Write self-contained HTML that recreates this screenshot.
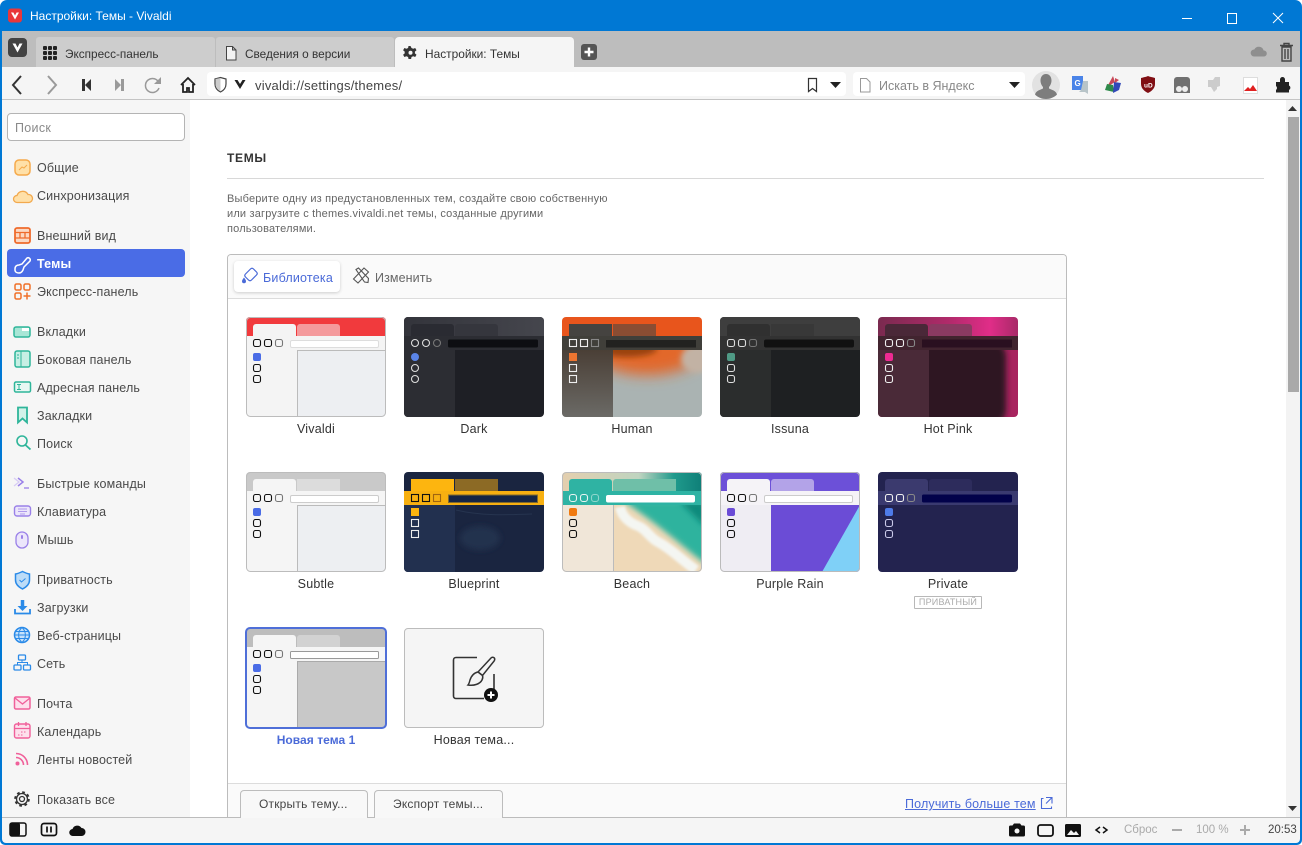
<!DOCTYPE html>
<html lang="ru"><head><meta charset="utf-8"><title>Настройки: Темы - Vivaldi</title>
<style>
html,body{margin:0;padding:0;width:1302px;height:845px;overflow:hidden;background:#fff}
body{font-family:"Liberation Sans","Noto Sans CJK SC",sans-serif;position:relative}
.b{position:absolute;box-sizing:border-box}
.t{position:absolute;white-space:nowrap;line-height:20px;height:20px;font-size:12.5px;color:#4a4a4a;margin-top:1px}
.c{text-align:center;width:140px;color:#333;font-size:12.5px;letter-spacing:.2px}
.s{left:37px;letter-spacing:.15px}
.d{font-size:11px;color:#666;letter-spacing:.18px;left:227px}
.n{margin-top:0}
svg{position:absolute;left:0;top:0}
</style></head><body>
<div class="b" style="left:0;top:0;width:1302px;height:845px;background:#0078d4;border-radius:7px 7px 5px 5px"></div>
<div class="b" style="left:2px;top:31px;width:1298px;height:36px;background:#bdbdbd"></div>
<div class="b" style="left:36px;top:37px;width:179px;height:30px;background:#cdcdcd;border-radius:3px 3px 0 0"></div>
<div class="b" style="left:216px;top:37px;width:178px;height:30px;background:#cdcdcd;border-radius:3px 3px 0 0"></div>
<div class="b" style="left:395px;top:37px;width:179px;height:31px;background:#f5f5f5;border-radius:4px 4px 0 0"></div>
<div class="b" style="left:2px;top:67px;width:1298px;height:33px;background:#f5f5f5;border-bottom:1px solid #c4c4c4"></div>
<div class="b" style="left:207px;top:72px;width:639px;height:24px;background:#fff;border-radius:4px"></div>
<div class="b" style="left:853px;top:72px;width:172px;height:24px;background:#fff;border-radius:4px"></div>
<div class="b" style="left:2px;top:100px;width:1298px;height:717px;background:#fff"></div>
<div class="b" style="left:2px;top:100px;width:188px;height:717px;background:#f6f6f6"></div>
<div class="b" style="left:1286px;top:100px;width:14px;height:717px;background:#f3f3f3"></div>
<div class="b" style="left:1288px;top:117px;width:11px;height:275px;background:#a9a9a9"></div>
<div class="b" style="left:2px;top:817px;width:1298px;height:26px;background:#f5f5f5;border-top:1px solid #bcbcbc;border-radius:0 0 4px 4px"></div>

<div class="b" style="left:7px;top:113px;width:178px;height:28px;background:#fff;border:1px solid #b4b4b4;border-radius:4px"></div>
<div class="b" style="left:7px;top:249px;width:178px;height:28px;background:#4a6ce6;border-radius:4px"></div>
<div class="t n" style="left:15px;top:118px;color:#8a8a8a;letter-spacing:.3px">Поиск</div>
<div class="t s" style="top:157px">Общие</div>
<div class="t s" style="top:185px">Синхронизация</div>
<div class="t s" style="top:225px">Внешний вид</div>
<div class="t s" style="top:253px;color:#fff;font-weight:bold">Темы</div>
<div class="t s" style="top:281px">Экспресс-панель</div>
<div class="t s" style="top:321px">Вкладки</div>
<div class="t s" style="top:349px">Боковая панель</div>
<div class="t s" style="top:377px">Адресная панель</div>
<div class="t s" style="top:405px">Закладки</div>
<div class="t s" style="top:433px">Поиск</div>
<div class="t s" style="top:473px">Быстрые команды</div>
<div class="t s" style="top:501px">Клавиатура</div>
<div class="t s" style="top:529px">Мышь</div>
<div class="t s" style="top:569px">Приватность</div>
<div class="t s" style="top:597px">Загрузки</div>
<div class="t s" style="top:625px">Веб-страницы</div>
<div class="t s" style="top:653px">Сеть</div>
<div class="t s" style="top:693px">Почта</div>
<div class="t s" style="top:721px">Календарь</div>
<div class="t s" style="top:749px">Ленты новостей</div>
<div class="t s" style="top:789px">Показать все</div>

<div class="t n" style="left:30px;top:6px;color:#fff;font-size:12px">Настройки: Темы - Vivaldi</div>
<div class="t" style="left:65px;top:43px;font-size:11.8px;color:#333">Экспресс-панель</div>
<div class="t" style="left:245px;top:43px;font-size:11.8px;color:#333">Сведения о версии</div>
<div class="t" style="left:425px;top:43px;font-size:11.9px;color:#333">Настройки: Темы</div>
<div class="t" style="left:255px;top:75px;font-size:13px;letter-spacing:.22px;color:#444">vivaldi://settings/themes/</div>
<div class="t" style="left:879px;top:75px;font-size:12.5px;color:#888">Искать в Яндекс</div>

<div class="t" style="left:227px;top:147px;font-weight:bold;font-size:12px;color:#333;letter-spacing:.7px">ТЕМЫ</div>
<div class="b" style="left:227px;top:178px;width:1037px;height:1px;background:#d8d8d8"></div>
<div class="t d" style="top:188px">Выберите одну из предустановленных тем, создайте свою собственную</div>
<div class="t d" style="top:203px">или загрузите с themes.vivaldi.net темы, созданные другими</div>
<div class="t d" style="top:218px">пользователями.</div>

<div class="b" style="left:227px;top:254px;width:840px;height:563px;border:1px solid #bcbcbc;border-bottom:0;border-radius:4px 4px 0 0;background:#fff"></div>
<div class="b" style="left:228px;top:255px;width:838px;height:44px;background:#fafafa;border-bottom:1px solid #dcdcdc;border-radius:3px 3px 0 0"></div>
<div class="b" style="left:234px;top:261px;width:106px;height:31px;background:#fff;border-radius:4px;box-shadow:0 1px 3px rgba(0,0,0,.18)"></div>
<div class="t" style="left:263px;top:267px;color:#4a6ad8;font-size:12.5px;letter-spacing:.2px">Библиотека</div>
<div class="t" style="left:375px;top:267px;color:#666;font-size:12.5px;letter-spacing:.1px">Изменить</div>

<div class="t c" style="left:246px;top:418px">Vivaldi</div>
<div class="t c" style="left:404px;top:418px">Dark</div>
<div class="t c" style="left:562px;top:418px">Human</div>
<div class="t c" style="left:720px;top:418px">Issuna</div>
<div class="t c" style="left:878px;top:418px">Hot Pink</div>
<div class="t c" style="left:246px;top:573px">Subtle</div>
<div class="t c" style="left:404px;top:573px">Blueprint</div>
<div class="t c" style="left:562px;top:573px">Beach</div>
<div class="t c" style="left:720px;top:573px">Purple Rain</div>
<div class="t c" style="left:878px;top:573px">Private</div>
<div class="b" style="left:914px;top:596px;width:68px;height:13px;border:1px solid #b8b8b8;border-radius:1px;background:#fff;text-align:center;font-size:9px;line-height:11px;color:#aaa;letter-spacing:.2px">ПРИВАТНЫЙ</div>
<div class="t c" style="left:246px;top:729px;color:#4a6ad8;font-weight:bold;font-size:12px;letter-spacing:.05px">Новая тема 1</div>
<div class="t c" style="left:404px;top:729px">Новая тема...</div>

<div class="b" style="left:404px;top:628px;width:140px;height:100px;background:#f5f5f5;border:1px solid #bcbcbc;border-radius:4px"></div>

<div class="b" style="left:228px;top:783px;width:838px;height:1px;background:#dcdcdc"></div>
<div class="b" style="left:228px;top:784px;width:838px;height:33px;background:#fafafa"></div>
<div class="b" style="left:240px;top:790px;width:128px;height:28px;background:#f8f8f8;border:1px solid #bcbcbc;border-bottom:0;border-radius:4px 4px 0 0"></div>
<div class="b" style="left:374px;top:790px;width:129px;height:28px;background:#f8f8f8;border:1px solid #bcbcbc;border-bottom:0;border-radius:4px 4px 0 0"></div>
<div class="t n" style="left:259px;top:794px;color:#444;font-size:12px;letter-spacing:.2px">Открыть тему...</div>
<div class="t n" style="left:393px;top:794px;color:#444;font-size:12px;letter-spacing:.2px">Экспорт темы...</div>
<div class="t n" style="left:905px;top:794px;color:#4a6ad8;text-decoration:underline;font-size:12.5px;letter-spacing:.16px">Получить больше тем</div>

<div class="t n" style="left:1124px;top:820px;color:#aaa;font-size:11.5px">Сброс</div>
<div class="t n" style="left:1196px;top:820px;color:#aaa;font-size:11.5px">100 %</div>
<div class="t n" style="left:1268px;top:820px;color:#444;font-size:11.5px">20:53</div>

<svg width="1302" height="845" viewBox="0 0 1302 845" fill="none">
<defs>
<clipPath id="cp"><rect width="140" height="100" rx="4"/></clipPath>
<clipPath id="cc"><rect x="51" y="33" width="89" height="67"/></clipPath>
<filter id="f3" x="-30%" y="-30%" width="160%" height="160%"><feGaussianBlur stdDeviation="3"/></filter>
<filter id="f6" x="-40%" y="-40%" width="180%" height="180%"><feGaussianBlur stdDeviation="7"/></filter>
<filter id="f1" x="-20%" y="-20%" width="140%" height="140%"><feGaussianBlur stdDeviation="1.200"/></filter>
<linearGradient id="gD" x1="0" y1="0" x2="1" y2="0"><stop offset="0" stop-color="#33343b"/><stop offset="1" stop-color="#45464d"/></linearGradient>
<linearGradient id="gHs" x1="0" y1="0" x2="0" y2="1"><stop offset="0" stop-color="#4a3f36"/><stop offset="1" stop-color="#6b6a66"/></linearGradient>
<linearGradient id="gP" x1="0" y1="0" x2="1" y2="0"><stop offset="0" stop-color="#7a2a4f"/><stop offset=".5" stop-color="#b02a6a"/><stop offset=".8" stop-color="#e02d88"/><stop offset="1" stop-color="#a82a68"/></linearGradient>
<linearGradient id="gB" x1="0" y1="0" x2="1" y2="0"><stop offset="0" stop-color="#e4cfae"/><stop offset=".55" stop-color="#bfd4c0"/><stop offset=".8" stop-color="#1f9a8c"/><stop offset="1" stop-color="#0f7f78"/></linearGradient>
</defs>

<!-- titlebar -->
<rect x="8" y="8.500" width="14" height="14" rx="3" fill="#e8373a"/>
<path d="M11 12.500l4 7 4-7h-2.400l-1.600 3-1.600-3z" fill="#fff"/>
<path d="M1182 18.500h10" stroke="#fff" stroke-width="1"/>
<rect x="1227.500" y="13.500" width="9" height="10" stroke="#fff"/>
<path d="M1273 13l10 10M1283 13l-10 10" stroke="#fff"/>

<!-- tab bar -->
<rect x="8" y="38" width="19" height="19" rx="4" fill="#434343"/>
<path d="M12.500 43.500l5 9 5-9h-3l-2 4-2-4z" fill="#fff"/>
<g fill="#222"><rect x="43" y="46" width="4" height="4" rx="1"/><rect x="48" y="46" width="4" height="4" rx="1"/><rect x="53" y="46" width="4" height="4" rx="1"/><rect x="43" y="51" width="4" height="4" rx="1"/><rect x="48" y="51" width="4" height="4" rx="1"/><rect x="53" y="51" width="4" height="4" rx="1"/><rect x="43" y="56" width="4" height="4" rx="1"/><rect x="48" y="56" width="4" height="4" rx="1"/><rect x="53" y="56" width="4" height="4" rx="1"/></g>
<path d="M226.500 46.500h6l3.500 3.500v10h-9.500zM232.500 46.500v3.500h3.500" stroke="#444" fill="#f3f3f3"/>
<path d="M410.500 46l1 2 1.700.7 2-.7 1.300 2.200-1.600 1.400v1.800l1.600 1.400-1.300 2.200-2-.7-1.700.7-.4 2h-2.600l-.4-2-1.700-.7-2 .7-1.300-2.200 1.600-1.400v-1.800l-1.600-1.400 1.300-2.200 2 .7 1.700-.7.4-2z" fill="#333"/><circle cx="410.500" cy="52.800" r="2" fill="#f5f5f5"/>
<rect x="581" y="44" width="16" height="16" rx="3" fill="#555"/><path d="M589 47.500v9M584.500 52h9" stroke="#fff" stroke-width="2.400"/>
<path d="M1254 56.500a3.500 3.500 0 0 1 .3-7 5 5 0 0 1 9.300 1 3 3 0 0 1 .4 6z" fill="#8e8e8e"/>
<path d="M1280 45.500h13M1284 45.500v-2h5v2M1282 47v14h9V47zM1285 49v10M1288 49v10" stroke="#444" stroke-width="1.400"/>

<!-- toolbar -->
<path d="M21 76l-8 9 8 9" stroke="#333" stroke-width="2"/>
<path d="M48 76l8 9-8 9" stroke="#9a9a9a" stroke-width="2"/>
<path d="M82 79h3v12h-3zM91 79v12l-6-6z" fill="#333"/>
<path d="M124 79h-3v12h3zM115 79v12l6-6z" fill="#9a9a9a"/>
<path d="M159 83a7 7 0 1 0 0 5" stroke="#999" stroke-width="1.500"/><path d="M161 77v7h-7z" fill="#999"/>
<path d="M181 85l7-7 7 7M183 84v8h4v-4h2v4h4v-8" stroke="#222" stroke-width="1.800"/>
<path d="M215 79l5.500-1.500 5.500 1.500v5c0 4-2.500 6.500-5.500 8-3-1.500-5.500-4-5.500-8z" stroke="#444" stroke-width="1.200"/><path d="M220.500 78v13c-3-1.500-5-4-5-7v-5z" fill="#ccc"/>
<path d="M234.500 80l5.500 9 5.500-9h-3l-2.500 4-2.500-4z" fill="#222"/>
<path d="M808.500 78.500h8v13l-4-3-4 3z" stroke="#333" stroke-width="1.200"/>
<path d="M830 82h11l-5.500 6z" fill="#222"/>
<path d="M860.500 78.500h6l3.500 3.500v10h-9.500z" stroke="#999"/>
<path d="M1009 82h11l-5.500 6z" fill="#222"/>
<circle cx="1046" cy="85" r="14" fill="#e2e2e2"/>
<path d="M1046 74c3.500 0 5.500 3 5.500 6.500 0 3-1.500 5.500-2.500 6.500v1.500c2 1.200 7 1.800 8 6-2.500 2.800-7 4.500-11 4.500s-8.500-1.700-11-4.500c1-4.200 6-4.800 8-6V87c-1-1-2.500-3.500-2.500-6.500 0-3.500 2-6.500 5.500-6.500z" fill="#7d7d7d"/>
<path d="M1072 76h11v14h-11z" fill="#4a84e8"/><path d="M1083 81h5v13l-3-2h-6l2-2z" fill="#b8c4c8"/><text x="1074.500" y="86" font-family="Liberation Sans" font-size="8" font-weight="bold" fill="#fff">G</text>
<path d="M1113 76l2 6-8 5z" fill="#c84858"/><path d="M1107 84l6 1 1 7-9-2z" fill="#2e8a4a"/><path d="M1114 82l7 1-2 7-6 3z" fill="#3248b8"/><path d="M1115 78l4 2-4 3z" fill="#c84858"/>
<path d="M1141 78c3-1 5-1 7-2 2 1 4 1 7 2v6c0 4-3 7-7 9-4-2-7-5-7-9z" fill="#800f14"/><text x="1144" y="87.500" font-family="Liberation Sans" font-size="6.500" font-weight="bold" fill="#fff">uD</text>
<path d="M1174 80a3 3 0 0 1 3-3h10a3 3 0 0 1 3 3v13h-16z" fill="#707070"/><circle cx="1179" cy="89" r="3" fill="#eee"/><circle cx="1185" cy="89" r="3" fill="#eee"/>
<path d="M1208 80h5l2-3h5v9l-3 1v2l-3 3-3-5h-3z" fill="#ccc"/>
<rect x="1243.500" y="77.500" width="14" height="16" fill="#fff" stroke="#ddd"/><path d="M1244 91l4-4 2 2 3-4 4 6z" fill="#e02020"/>
<path d="M1276 82h4v-2.500a2.500 2.500 0 0 1 5 0V82h4v3.500a2.500 2.500 0 0 1 0 4.500v2.500h-13V90a2.500 2.500 0 0 0 0-4z" fill="#222"/>

<!-- sidebar icons -->
<rect x="15" y="160" width="15" height="15" rx="4" fill="#ffe0a8" stroke="#f5a94a" stroke-width="1.500"/><path d="M19 170l3-3 2 1 3-3" stroke="#f5a94a"/>
<path d="M17 202.500a3.500 3.500 0 0 1 0-7 6 6 0 0 1 11-1 4 4 0 0 1 1 8z" fill="#ffe0a8" stroke="#f2a94e" stroke-width="1.300"/>
<rect x="15" y="228" width="15" height="15" rx="2" stroke="#ef6b2c" stroke-width="1.800" fill="#fbd9c4"/><path d="M15 232.500h15M20 233v5M25 233v5M15 238h15" stroke="#ef6b2c" stroke-width="1.300"/>
<path d="M15 269c0-3 2-4 4-4l3-1 5-6c2-1 4 1 3 3l-6 6-1 3c-1 2-2 3-4 3-2 0-4-1-4-3z" stroke="#fff" stroke-width="1.500"/>
<rect x="15" y="284" width="6" height="6" rx="1.500" stroke="#f07028" stroke-width="1.500"/><rect x="24" y="284" width="6" height="6" rx="1.500" stroke="#f07028" stroke-width="1.500"/><rect x="15" y="293" width="6" height="6" rx="1.500" stroke="#f07028" stroke-width="1.500"/><path d="M27 292.500v7M23.500 296h7" stroke="#f07028" stroke-width="1.500"/>
<rect x="14" y="327" width="16" height="10" rx="2" fill="#a8e6d6" stroke="#2fb59a" stroke-width="1.500"/><rect x="22" y="328" width="7" height="3" fill="#fff"/>
<rect x="15" y="351" width="15" height="16" rx="2" fill="#c6efe4" stroke="#2fb59a" stroke-width="1.500"/><path d="M21 351v16" stroke="#2fb59a"/><path d="M17 355h2M17 358h2" stroke="#2fb59a"/>
<rect x="14.500" y="382" width="16" height="10" rx="1.500" stroke="#2fb59a" stroke-width="1.500" fill="#e8f8f3"/><path d="M17 384.500h4M17 389.500h4M19 385v4" stroke="#2fb59a"/>
<path d="M18 407.500h9v15l-4.500-4-4.500 4z" stroke="#2fb59a" stroke-width="1.800" fill="#d3f2e9"/>
<circle cx="22" cy="441" r="5" stroke="#2fb59a" stroke-width="1.600"/><path d="M25.500 445l5 4.500" stroke="#2fb59a" stroke-width="1.800"/>
<path d="M14 478l5 4-5 4" stroke="#d7cbf5" stroke-width="1.300"/><path d="M18 478l5 4-5 4" stroke="#9a80e8" stroke-width="1.500"/><path d="M24 488h5" stroke="#9a80e8" stroke-width="1.300"/>
<rect x="14.500" y="506" width="16" height="10" rx="2.500" fill="#ece6fb" stroke="#9a80e8" stroke-width="1.400"/><path d="M18 509h9M18 511.500h9M20 514h5" stroke="#9a80e8" stroke-width=".8"/>
<rect x="16" y="532" width="12" height="16" rx="6" fill="#ece6fb" stroke="#9a80e8" stroke-width="1.300"/><rect x="21" y="535" width="2" height="4" rx="1" fill="#9a80e8"/>
<path d="M15.500 574c3-.5 5-1.500 7-2.500 2 1 4 2 7 2.500v6c0 4-3 7-7 9-4-2-7-5-7-9z" fill="#bcdcf8" stroke="#2a8ae8" stroke-width="1.500"/><path d="M19.500 580l2 2 4-3.500" stroke="#2a8ae8"/>
<path d="M22.500 600v9" stroke="#2a8ae8" stroke-width="3.500"/><path d="M17.500 606h10l-5 5z" fill="#2a8ae8"/><path d="M15 609v4.500h15V609" stroke="#2a8ae8" stroke-width="1.800"/>
<circle cx="22" cy="635" r="7.500" fill="#c6e2fb" stroke="#2a8ae8" stroke-width="1.500"/><path d="M14.500 635h15M15.500 631.500h13M15.500 638.500h13M22 627.500c-4.500 4-4.500 11 0 15M22 627.500c4.500 4 4.500 11 0 15" stroke="#2a8ae8"/>
<rect x="18.500" y="655" width="7" height="5" rx="1" stroke="#2a8ae8" stroke-width="1.300"/><rect x="14" y="665" width="7" height="5" rx="1" stroke="#2a8ae8" stroke-width="1.300"/><rect x="23.500" y="665" width="7" height="5" rx="1" stroke="#2a8ae8" stroke-width="1.300"/><path d="M22 660v2.500M17.500 665v-2.500h10v2.500" stroke="#2a8ae8"/>
<rect x="14.500" y="697" width="15.500" height="12" rx="1.500" fill="#fde0ec" stroke="#f0609a" stroke-width="1.500"/><path d="M15 698l7.500 6 7.500-6" stroke="#f0609a" stroke-width="1.300"/>
<rect x="14.500" y="724" width="15.500" height="14" rx="2" fill="#fde0ec" stroke="#f0609a" stroke-width="1.400"/><path d="M14.500 728.500h15.500M18.500 722v4M26 722v4" stroke="#f0609a" stroke-width="1.300"/><path d="M21 732h1.500M24 732h1.500M18 735h1.500M21 735h1.500" stroke="#f0609a"/>
<circle cx="17.500" cy="763.500" r="2" fill="#f0609a"/><path d="M16 757.500a7.500 7.500 0 0 1 7.500 7.500M16 753.500a11.500 11.500 0 0 1 11.500 11.500" stroke="#f0609a" stroke-width="1.600"/>
<circle cx="22" cy="799" r="2.500" stroke="#333" stroke-width="1.300"/><circle cx="22" cy="799" r="5.500" stroke="#333" stroke-width="1.300"/><circle cx="22" cy="799" r="6.800" stroke="#333" stroke-width="2" stroke-dasharray="2.700 2.640"/>

<!-- panel tab icons -->
<path d="M245.500 274l5-5c1-1 2-1 3 0l3 3c1 1 1 2 0 3l-5 5c-1 1-2 1-3 0l-3-3c-1-1-1-2 0-3z" stroke="#4a6ad8" stroke-width="1.200"/><path d="M244 277.500c1 1.500 2 2.500 2 3.700a2 2 0 0 1-4 0c0-1.200 1-2.200 2-3.700z" fill="#4a6ad8"/>
<path d="M353.500 279l10.500-11 4.500 4-10.500 11zM356 269.500l2.500-1.500 10 10.500-.5 4-3.500-.5z" stroke="#555" stroke-width="1.100"/>
<path d="M1043.500 798.500h-2v10h10v-2M1046 797.500h6v6M1052 797.500l-6 6" stroke="#4a6ad8" stroke-width="1.100"/>

<!-- scrollbar arrows -->
<path d="M1288 111l4.500-5 4.500 5z" fill="#333"/><path d="M1288 806l4.500 5 4.500-5z" fill="#333"/>

<!-- status bar -->
<rect x="10" y="823" width="16" height="13" rx="2" stroke="#111" stroke-width="1.500"/><rect x="10" y="823" width="10" height="13" rx="2" fill="#111"/>
<rect x="41.500" y="823.500" width="15" height="12" rx="2.500" stroke="#111" stroke-width="1.700"/><path d="M47 826.500v6M51 826.500v6" stroke="#111" stroke-width="1.700"/>
<path d="M73 836a3.500 3.500 0 0 1-.5-7 5 5 0 0 1 9-1 4 4 0 0 1 0 8z" fill="#111"/>
<path d="M1009 835v-8a1.500 1.500 0 0 1 1.500-1.500h2l1.500-2h6l1.500 2h2a1.500 1.500 0 0 1 1.500 1.500v8a1.500 1.500 0 0 1-1.500 1.500h-13a1.500 1.500 0 0 1-1.500-1.500z" fill="#111"/><circle cx="1017" cy="831" r="2.500" fill="#f5f5f5"/>
<rect x="1038" y="825" width="15" height="11" rx="2.500" stroke="#111" stroke-width="1.800"/>
<rect x="1065" y="824" width="16" height="13" rx="1.500" fill="#111"/><path d="M1067 835l4-5 3 3 2-2 3 4z" fill="#f5f5f5"/>
<path d="M1100 827l-4 3 4 3M1103 827l4 3-4 3" stroke="#111" stroke-width="1.500"/>
<path d="M1172 830h10" stroke="#aaa" stroke-width="2"/><path d="M1240 830h10M1245 825v10" stroke="#aaa" stroke-width="2"/>

<!-- new theme icon -->
<path d="M477 657.500h-21a2.500 2.500 0 0 0-2.500 2.500v36a2.500 2.500 0 0 0 2.500 2.500h28M494 674v17" stroke="#333" stroke-width="1.600"/>
<path d="M491 658c1.500-1.500 4-.5 3.700 1.700-.2 1-.6 1.500-1.200 2.100l-11 13.700-4.500-3.500z" fill="#f5f5f5" stroke="#333" stroke-width="1.500"/>
<path d="M478 672c-5 1-7 5-8 8-.5 2-1 4-2 5 6 1 12-1 14-5 .8-1.500 1-3 .5-4.500z" fill="#f5f5f5" stroke="#333" stroke-width="1.500"/>
<circle cx="491" cy="695" r="7" fill="#111"/><path d="M491 691.500v7M487.500 695h7" stroke="#fff" stroke-width="2"/>

<!-- theme thumbs -->
<g transform="translate(246,317)"><g clip-path="url(#cp)"><rect width="140" height="100" fill="#f4f4f4"/><rect width="140" height="19" fill="#f13a3d"/><path d="M7 19V10a3 3 0 0 1 3-3h37a3 3 0 0 1 3 3v9z" fill="#f4f4f4"/><path d="M51 19V10a3 3 0 0 1 3-3h37a3 3 0 0 1 3 3v9z" fill="#f49a9c"/><rect x="51" y="33" width="89" height="67" fill="#edeff2"/><path d="M51 33.500h89M51.500 33v67" stroke="#bbb"/><rect x="44.500" y="23.500" width="88" height="7" rx="1.500" fill="#fff" stroke="#ddd"/><rect x="7.500" y="22.500" width="7" height="7" rx="2" stroke="#111" stroke-width="1.100"/><rect x="18.500" y="22.500" width="7" height="7" rx="2" stroke="#111" stroke-width="1.100"/><rect x="29.500" y="22.500" width="7" height="7" rx="2" stroke="#777" stroke-width="1.100"/><rect x="7" y="36" width="8" height="8" rx="2" fill="#4a6ce6"/><rect x="7.500" y="47.500" width="7" height="7" rx="2" stroke="#111" stroke-width="1.100"/><rect x="7.500" y="58.500" width="7" height="7" rx="2" stroke="#111" stroke-width="1.100"/></g><rect x=".5" y=".5" width="139" height="99" rx="4" stroke="#bcbcbc"/></g>

<g transform="translate(404,317)"><g clip-path="url(#cp)"><rect width="140" height="100" fill="#1e1f25"/><rect width="140" height="19" fill="url(#gD)"/><path d="M7 19V10a3 3 0 0 1 3-3h37a3 3 0 0 1 3 3v9z" fill="#2a2b32"/><path d="M51 19V10a3 3 0 0 1 3-3h37a3 3 0 0 1 3 3v9z" fill="#35363d"/><rect y="19" width="140" height="14" fill="#2c2d33"/><rect y="33" width="51" height="67" fill="#2c2d33"/><rect x="44" y="22.500" width="90" height="8" rx="1.500" fill="#0d0e12"/><circle cx="11" cy="26" r="3.500" stroke="#ddd" stroke-width="1.100"/><circle cx="22" cy="26" r="3.500" stroke="#ddd" stroke-width="1.100"/><circle cx="33" cy="26" r="3.500" stroke="#777" stroke-width="1.100"/><circle cx="11" cy="40" r="4" fill="#5a84e8"/><circle cx="11" cy="51" r="3.500" stroke="#ddd" stroke-width="1.100"/><circle cx="11" cy="62" r="3.500" stroke="#ddd" stroke-width="1.100"/></g></g>

<g transform="translate(562,317)"><g clip-path="url(#cp)"><rect width="140" height="19" fill="#e8551c"/><rect y="33" width="140" height="67" fill="#aab3b2"/><g clip-path="url(#cc)"><ellipse cx="85" cy="36" rx="52" ry="22" fill="#e2682a" filter="url(#f6)"/><ellipse cx="65" cy="32" rx="30" ry="8" fill="#9a4210" filter="url(#f3)"/><ellipse cx="135" cy="42" rx="16" ry="14" fill="#c2b2a4" filter="url(#f3)"/></g><rect y="33" width="51" height="67" fill="url(#gHs)"/><path d="M7 19V7h43v12z" fill="#454340"/><path d="M51 19V7h43v12z" fill="#8a4d33"/><rect y="19" width="140" height="14" fill="#403f3a"/><rect x="44" y="23" width="90" height="7.500" fill="#222220"/><rect x="7.500" y="22.500" width="7" height="7" stroke="#eee" stroke-width="1.100"/><rect x="18.500" y="22.500" width="7" height="7" stroke="#eee" stroke-width="1.100"/><rect x="29.500" y="22.500" width="7" height="7" stroke="#888" stroke-width="1.100"/><rect x="7" y="36" width="8" height="8" fill="#ee7530"/><rect x="7.500" y="47.500" width="7" height="7" stroke="#eee" stroke-width="1.100"/><rect x="7.500" y="58.500" width="7" height="7" stroke="#eee" stroke-width="1.100"/></g></g>

<g transform="translate(720,317)"><g clip-path="url(#cp)"><rect width="140" height="100" fill="#1e2022"/><rect width="140" height="19" fill="#3e3e3e"/><path d="M7 19V10a3 3 0 0 1 3-3h37a3 3 0 0 1 3 3v9z" fill="#303030"/><path d="M51 19V7h43v12z" fill="#383838"/><rect y="19" width="140" height="14" fill="#323232"/><rect y="33" width="51" height="67" fill="#2b2d2d"/><rect x="44" y="22.500" width="90" height="8" rx="2" fill="#111"/><rect x="7.500" y="22.500" width="7" height="7" rx="2" stroke="#ddd" stroke-width="1.100"/><rect x="18.500" y="22.500" width="7" height="7" rx="2" stroke="#ddd" stroke-width="1.100"/><rect x="29.500" y="22.500" width="7" height="7" rx="2" stroke="#777" stroke-width="1.100"/><rect x="7" y="36" width="8" height="8" rx="2" fill="#4f9a85"/><rect x="7.500" y="47.500" width="7" height="7" rx="2" stroke="#ddd" stroke-width="1.100"/><rect x="7.500" y="58.500" width="7" height="7" rx="2" stroke="#ddd" stroke-width="1.100"/></g></g>

<g transform="translate(878,317)"><g clip-path="url(#cp)"><rect width="140" height="19" fill="url(#gP)"/><rect y="33" width="140" height="67" fill="#a8245f"/><g clip-path="url(#cc)"><rect x="30" y="25" width="98" height="82" rx="14" fill="#2e1520" filter="url(#f3)"/></g><path d="M7 19V10a3 3 0 0 1 3-3h37a3 3 0 0 1 3 3v9z" fill="#4a2838"/><path d="M51 19V10a3 3 0 0 1 3-3h37a3 3 0 0 1 3 3v9z" fill="#8a3a62"/><rect y="19" width="140" height="14" fill="#41242f"/><rect y="33" width="51" height="67" fill="#4a2a38"/><rect x="44" y="22.500" width="90" height="8" fill="#2a1020"/><rect x="7.500" y="22.500" width="7" height="7" rx="2" stroke="#eee" stroke-width="1.100"/><rect x="18.500" y="22.500" width="7" height="7" rx="2" stroke="#eee" stroke-width="1.100"/><rect x="29.500" y="22.500" width="7" height="7" rx="2" stroke="#888" stroke-width="1.100"/><rect x="7" y="36" width="8" height="8" rx="2" fill="#ee2a92"/><rect x="7.500" y="47.500" width="7" height="7" rx="2" stroke="#eee" stroke-width="1.100"/><rect x="7.500" y="58.500" width="7" height="7" rx="2" stroke="#eee" stroke-width="1.100"/></g></g>

<g transform="translate(246,472)"><g clip-path="url(#cp)"><rect width="140" height="100" fill="#f5f5f5"/><rect width="140" height="19" fill="#c9c9c9"/><path d="M7 19V10a3 3 0 0 1 3-3h37a3 3 0 0 1 3 3v9z" fill="#f5f5f5"/><path d="M51 19V7h43v12z" fill="#dcdcdc"/><rect x="51" y="33" width="89" height="67" fill="#edeff2"/><path d="M51 33.500h89M51.500 33v67" stroke="#bbb"/><rect x="44.500" y="23.500" width="88" height="7" rx="1.500" fill="#fff" stroke="#ccc"/><rect x="7.500" y="22.500" width="7" height="7" rx="2" stroke="#111" stroke-width="1.100"/><rect x="18.500" y="22.500" width="7" height="7" rx="2" stroke="#111" stroke-width="1.100"/><rect x="29.500" y="22.500" width="7" height="7" rx="2" stroke="#777" stroke-width="1.100"/><rect x="7" y="36" width="8" height="8" rx="2" fill="#4a6ce6"/><rect x="7.500" y="47.500" width="7" height="7" rx="2" stroke="#111" stroke-width="1.100"/><rect x="7.500" y="58.500" width="7" height="7" rx="2" stroke="#111" stroke-width="1.100"/></g><rect x=".5" y=".5" width="139" height="99" rx="4" stroke="#bcbcbc"/></g>

<g transform="translate(404,472)"><g clip-path="url(#cp)"><rect width="140" height="100" fill="#1a2540"/><path d="M7 19V7h43v12z" fill="#fdb50f"/><path d="M51 19V7h43v12z" fill="#8c6a25"/><rect y="19" width="140" height="14" fill="#f7b011"/><rect y="33" width="51" height="67" fill="#22304f"/><ellipse cx="76" cy="66" rx="20" ry="12" fill="#21304e" filter="url(#f3)"/><path d="M52 38c25 6 50 5 76 4" stroke="#26344f" stroke-width="1"/><rect x="44.500" y="23" width="89" height="7.500" fill="#152545" stroke="#806a30"/><rect x="7.500" y="22.500" width="7" height="7" stroke="#111" stroke-width="1.100"/><rect x="18.500" y="22.500" width="7" height="7" stroke="#111" stroke-width="1.100"/><rect x="29.500" y="22.500" width="7" height="7" stroke="#a06510" stroke-width="1.100"/><rect x="7" y="36" width="8" height="8" fill="#fdb50f"/><rect x="7.500" y="47.500" width="7" height="7" stroke="#eee" stroke-width="1.100"/><rect x="7.500" y="58.500" width="7" height="7" stroke="#eee" stroke-width="1.100"/></g></g>

<g transform="translate(562,472)"><g clip-path="url(#cp)"><rect width="140" height="19" fill="url(#gB)"/><rect x="51" y="33" width="89" height="67" fill="#efd9b8"/><g clip-path="url(#cc)"><path d="M60 28h85v65c-22-16-42-36-85-65z" fill="#2fb39e" filter="url(#f3)"/><path d="M118 30h25v25z" fill="#0f8a7c" filter="url(#f3)"/><path d="M58 35c2 10 10 16 18 19 8 3 12 12 20 16 12 6 26 20 38 28" stroke="#f4f6f2" stroke-width="10" filter="url(#f1)"/></g><rect y="33" width="51" height="67" fill="#f0e6d8"/><path d="M7 19V10a3 3 0 0 1 3-3h37a3 3 0 0 1 3 3v9z" fill="#2fb3a3"/><path d="M51 19V10a3 3 0 0 1 3-3h60v12z" fill="#6fbfa8"/><rect y="19" width="140" height="14" fill="#2eb3a4"/><path d="M51.500 33v67" stroke="#bbb"/><rect x="44" y="23" width="89" height="7.500" rx="2" fill="#fff"/><rect x="7.500" y="22.500" width="7" height="7" rx="2.500" stroke="#e8f4f2" stroke-width="1.100"/><rect x="18.500" y="22.500" width="7" height="7" rx="2.500" stroke="#e8f4f2" stroke-width="1.100"/><rect x="29.500" y="22.500" width="7" height="7" rx="2.500" stroke="#8fd6cc" stroke-width="1.100"/><rect x="7" y="36" width="8" height="8" rx="2" fill="#f07a10"/><rect x="7.500" y="47.500" width="7" height="7" rx="2" stroke="#111" stroke-width="1.100"/><rect x="7.500" y="58.500" width="7" height="7" rx="2" stroke="#111" stroke-width="1.100"/></g><rect x=".5" y=".5" width="139" height="99" rx="4" stroke="#bcbcbc"/></g>

<g transform="translate(720,472)"><g clip-path="url(#cp)"><rect width="140" height="19" fill="#6c50d8"/><rect y="19" width="140" height="14" fill="#f5f3f7"/><path d="M7 19V10a3 3 0 0 1 3-3h37a3 3 0 0 1 3 3v9z" fill="#f5f3f7"/><path d="M51 19V10a3 3 0 0 1 3-3h37a3 3 0 0 1 3 3v9z" fill="#b3a3e8"/><rect y="33" width="51" height="67" fill="#efedf3"/><rect x="51" y="33" width="89" height="67" fill="#6b4cd6"/><path d="M140 33v67h-38z" fill="#7fd0f7"/><rect x="44.500" y="23.500" width="88" height="7" rx="1.500" fill="#fff" stroke="#ccc"/><rect x="7.500" y="22.500" width="7" height="7" rx="2" stroke="#111" stroke-width="1.100"/><rect x="18.500" y="22.500" width="7" height="7" rx="2" stroke="#111" stroke-width="1.100"/><rect x="29.500" y="22.500" width="7" height="7" rx="2" stroke="#777" stroke-width="1.100"/><rect x="7" y="36" width="8" height="8" rx="2" fill="#6b4cd6"/><rect x="7.500" y="47.500" width="7" height="7" rx="2" stroke="#111" stroke-width="1.100"/><rect x="7.500" y="58.500" width="7" height="7" rx="2" stroke="#111" stroke-width="1.100"/></g><rect x=".5" y=".5" width="139" height="99" rx="4" stroke="#bbb"/></g>

<g transform="translate(878,472)"><g clip-path="url(#cp)"><rect width="140" height="100" fill="#23234f"/><path d="M7 19V10a3 3 0 0 1 3-3h37a3 3 0 0 1 3 3v9z" fill="#3b3a6e"/><path d="M51 19V10a3 3 0 0 1 3-3h37a3 3 0 0 1 3 3v9z" fill="#2d2c5c"/><rect y="19" width="140" height="14" fill="#3a3a70"/><rect x="44" y="22.500" width="90" height="8" rx="1.500" fill="#02024a"/><rect x="7.500" y="22.500" width="7" height="7" rx="2" stroke="#eee" stroke-width="1.100"/><rect x="18.500" y="22.500" width="7" height="7" rx="2" stroke="#eee" stroke-width="1.100"/><rect x="29.500" y="22.500" width="7" height="7" rx="2" stroke="#888" stroke-width="1.100"/><rect x="7" y="36" width="8" height="8" rx="2" fill="#4e7be8"/><rect x="7.500" y="47.500" width="7" height="7" rx="2" stroke="#c8c8e8" stroke-width="1.100"/><rect x="7.500" y="58.500" width="7" height="7" rx="2" stroke="#c8c8e8" stroke-width="1.100"/></g></g>

<g transform="translate(246,628)"><g clip-path="url(#cp)"><rect width="140" height="100" fill="#f5f5f5"/><rect width="140" height="19" fill="#bdbdbd"/><path d="M7 19V10a3 3 0 0 1 3-3h37a3 3 0 0 1 3 3v9z" fill="#f5f5f5"/><path d="M51 19V10a3 3 0 0 1 3-3h37a3 3 0 0 1 3 3v9z" fill="#d2d2d2"/><rect x="51" y="33" width="89" height="67" fill="#c8c8c8"/><path d="M51 33.500h89M51.500 33v67" stroke="#aaa"/><rect x="44.500" y="23.500" width="88" height="7" rx="1" fill="#fff" stroke="#999"/><rect x="7.500" y="22.500" width="7" height="7" rx="2" stroke="#111" stroke-width="1.100"/><rect x="18.500" y="22.500" width="7" height="7" rx="2" stroke="#111" stroke-width="1.100"/><rect x="29.500" y="22.500" width="7" height="7" rx="2" stroke="#777" stroke-width="1.100"/><rect x="7" y="36" width="8" height="8" rx="2" fill="#4a6ce6"/><rect x="7.500" y="47.500" width="7" height="7" rx="2" stroke="#111" stroke-width="1.100"/><rect x="7.500" y="58.500" width="7" height="7" rx="2" stroke="#111" stroke-width="1.100"/></g><rect x="0" y="0" width="140" height="100" rx="4" stroke="#4f6fd8" stroke-width="2"/></g>
</svg>
</body></html>
